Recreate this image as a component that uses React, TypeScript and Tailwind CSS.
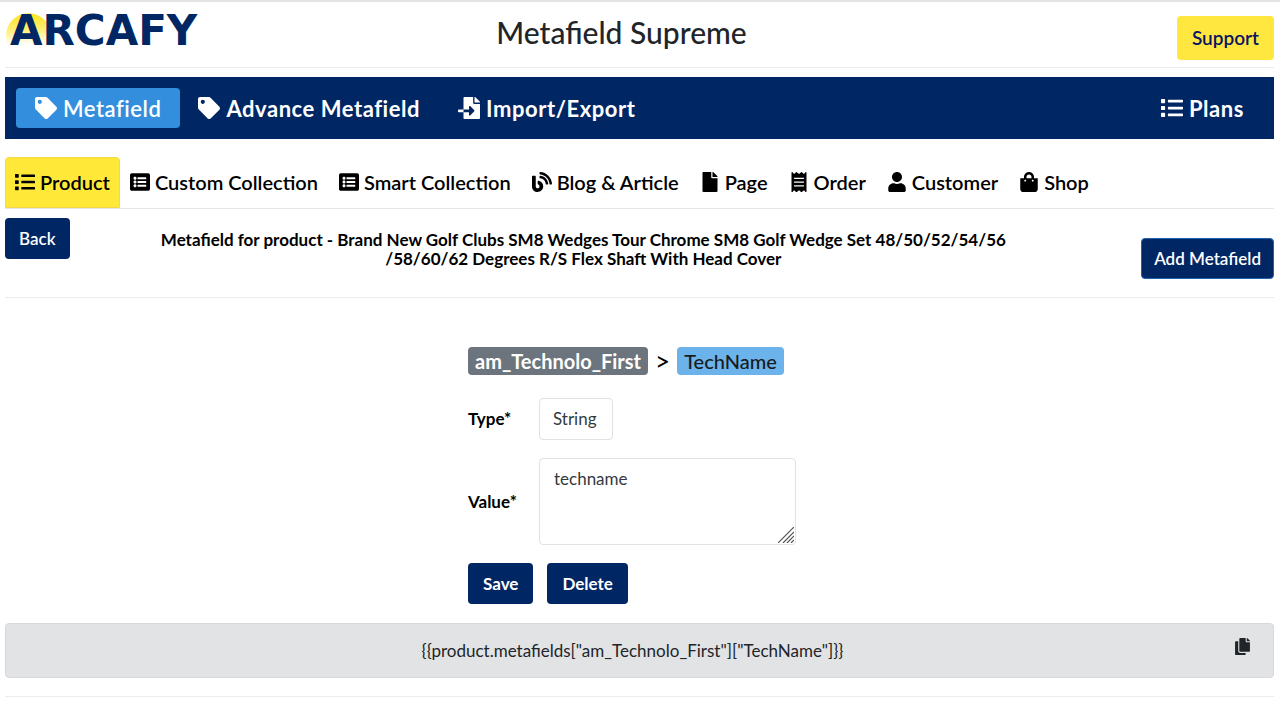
import type { ReactNode } from "react";
import { FaTag, FaList, FaListAlt, FaFileImport, FaBlog, FaFile, FaReceipt, FaUser, FaShoppingBag, FaCopy } from "react-icons/fa";

function Logo() {
  return (
    <a href="#" aria-label="Arcafy" className="block w-[220px]">
      <svg viewBox="0 0 220 54" className="block h-[54px] w-full">
        <defs>
          <linearGradient id="sun" x1="0" y1="0" x2="0" y2="1">
            <stop offset="0" stopColor="#ffe31f" />
            <stop offset="0.5" stopColor="#ffee72" />
            <stop offset="1" stopColor="#ffffff" />
          </linearGradient>
        </defs>
        <path d="M3 43 A22.5 22.5 0 1 1 44 43 Z" fill="url(#sun)" />
        <text x="5" y="43" fontFamily="DejaVu Sans, sans-serif" fontWeight="700" fontSize="42" fill="#002664">ARCAFY</text>
      </svg>
    </a>
  );
}

function NavItem({ icon, label, active }: { icon: ReactNode; label: string; active?: boolean }) {
  return (
    <a
      href="#"
      className={
        active
          ? "flex h-10 items-center gap-1.5 rounded bg-[#338fdd] px-[19px] text-[22px] font-semibold tracking-wide"
          : "flex h-10 items-center gap-1.5 pr-5 pl-[18px] text-[22px] font-bold tracking-wide"
      }
    >
      {icon}
      {label}
    </a>
  );
}

const tabs = [
  { label: "Custom Collection", icon: <FaListAlt /> },
  { label: "Smart Collection", icon: <FaListAlt /> },
  { label: "Blog & Article", icon: <FaBlog /> },
  { label: "Page", icon: <FaFile /> },
  { label: "Order", icon: <FaReceipt /> },
  { label: "Customer", icon: <FaUser /> },
  { label: "Shop", icon: <FaShoppingBag /> },
];

const button = "h-[41px] shrink-0 rounded bg-[#002664] text-[17px] text-white";

export default function App() {
  return (
    <div className="border-t-2 border-[#e4e4e4] bg-white pr-1.5 pl-[5px] font-['Lato',sans-serif] text-black">
      <header className="grid h-[66px] grid-cols-[1fr_auto_1fr] items-start border-b border-[#ececec]">
        <Logo />
        <h1 className="pt-[11px] pr-9 text-[30px] leading-[38px] font-medium text-[#212529]">Metafield Supreme</h1>
        <button className="mt-3.5 h-11 justify-self-end rounded bg-[#ffe740] px-[15px] text-[19px] font-semibold text-[#0a1464]">Support</button>
      </header>

      <nav className="mt-[9px] flex h-[62px] items-center justify-between bg-[#002664] pr-2.5 pl-[11px] text-white">
        <div className="flex">
          <NavItem active icon={<FaTag />} label="Metafield" />
          <NavItem icon={<FaTag />} label="Advance Metafield" />
          <NavItem icon={<FaFileImport />} label="Import/Export" />
        </div>
        <NavItem icon={<FaList />} label="Plans" />
      </nav>

      <nav className="mt-[18px] flex h-[52px] border-b border-[#e6e6e6] text-[20px] font-semibold">
        <a href="#" className="flex items-center gap-[5px] rounded-t border border-[#f3d94a] bg-[#ffe838] px-[9px] pb-0.5">
          <FaList />
          Product
        </a>
        {tabs.map((t) => (
          <a key={t.label} href="#" className="flex items-center gap-[5px] pr-[11px] pl-2.5 pb-0.5">
            {t.icon}
            {t.label}
          </a>
        ))}
      </nav>

      <section className="flex h-[89px] items-start border-b border-[#ececec]">
        <button className={button + " mt-[9px] px-3.5 font-semibold"}>Back</button>
        <h2 className="mt-[21px] flex-1 pr-11 text-center text-[17px] leading-[19px] font-bold">
          Metafield for product - Brand New Golf Clubs SM8 Wedges Tour Chrome SM8 Golf Wedge Set 48/50/52/54/56
          <br />
          /58/60/62 Degrees R/S Flex Shaft With Head Cover
        </h2>
        <button className={button + " mt-[29px] border border-[#1c62b5] px-3 font-semibold"}>Add Metafield</button>
      </section>

      <main className="mx-auto mt-[49px] w-[343px]">
        <div className="flex items-center gap-[7px] text-[20px]">
          <span className="flex h-7 items-center rounded bg-[#6c757d] px-[7px] font-bold text-white">am_Technolo_First</span>
          <span className="text-[26px] leading-7">&gt;</span>
          <span className="flex h-7 items-center rounded bg-[#6cb2eb] px-[7px] font-medium text-[#161b20]">TechName</span>
        </div>
        <form className="mt-[23px] text-[17px]" onSubmit={(e) => e.preventDefault()}>
          <div className="flex items-center">
            <label htmlFor="type" className="w-[71px] font-bold">Type*</label>
            <input id="type" readOnly defaultValue="String" className="h-[42px] w-[74px] rounded border border-[#dfe2e6] px-[13px] pb-0.5 text-[#343a40]" />
          </div>
          <div className="mt-[18px] flex items-center">
            <label htmlFor="value" className="w-[71px] font-bold">Value*</label>
            <div className="relative">
              <textarea id="value" defaultValue="techname" className="block h-[87px] w-[257px] resize-none rounded border border-[#dfe2e6] px-3.5 py-2 leading-6 text-[#343a40]" />
              <svg viewBox="0 0 16 16" className="pointer-events-none absolute right-0.5 bottom-0.5 size-4" stroke="#555" strokeWidth="1.2">
                <path d="M0 16 16 0M5 16 16 5M9 16l7-7M13 16l3-3" />
              </svg>
            </div>
          </div>
          <div className="mt-[18px] flex gap-3.5">
            <button type="submit" className={button + " px-[15px] font-bold"}>Save</button>
            <button type="button" className={button + " px-[15px] font-bold"}>Delete</button>
          </div>
        </form>
      </main>

      <div className="mt-[19px] grid h-[55px] grid-cols-[1fr_auto_1fr] items-center rounded border border-[#d6d8db] bg-[#e2e3e5] text-[17px] text-[#212529]">
        <span />
        <code className="pr-3.5 font-['Lato',sans-serif]">{'{{product.metafields["am_Technolo_First"]["TechName"]}}'}</code>
        <button aria-label="Copy" className="mr-[22px] mb-2 justify-self-end">
          <FaCopy />
        </button>
      </div>
      <hr className="mt-[18px] border-[#ececec]" />
    </div>
  );
}
